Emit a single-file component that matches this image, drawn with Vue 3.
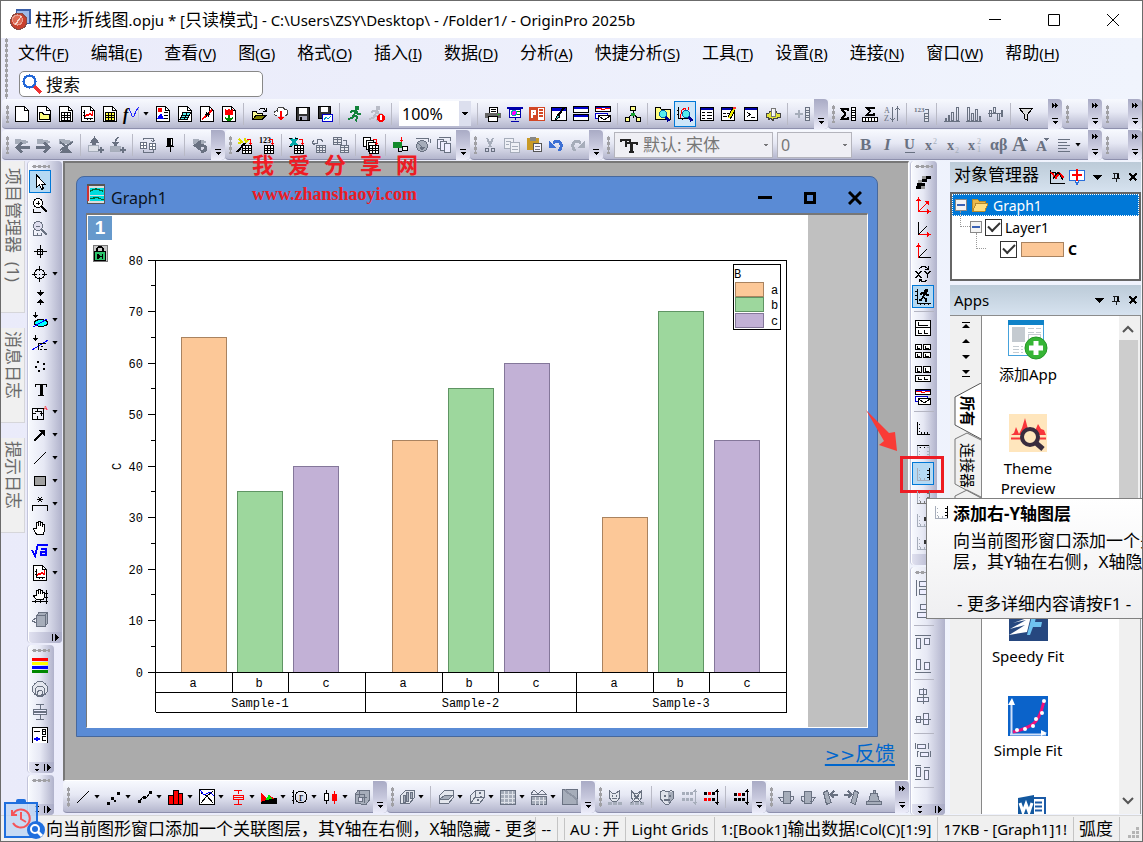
<script setup>
import { h } from 'vue'

const G = '#697181'
const L = '#a6adba'
const P = (d, s = '#000', f = 'none', w = 1) => `<path d="${d}" stroke="${s}" fill="${f}" stroke-width="${w}"/>`
const R = (x, y, w, hh, f = '#000', s = 'none') => `<rect x="${x}" y="${y}" width="${w}" height="${hh}" fill="${f}" stroke="${s}"/>`
const C = (x, y, r, f = 'none', s = '#000', w = 1) => `<circle cx="${x}" cy="${y}" r="${r}" fill="${f}" stroke="${s}" stroke-width="${w}"/>`
const T = (x, y, t, size, f = '#000', more = '') => `<text x="${x}" y="${y}" font-size="${size}" fill="${f}" font-family="Liberation Serif, serif" ${more}>${t}</text>`
const grid = (x, y, nx, ny, cw, ch, f = '#fff', s = '#000') => {
  let d = ''
  for (let i = 1; i < nx; i++) d += `M${x + i * cw} ${y}v${ny * ch}`
  for (let i = 1; i < ny; i++) d += `M${x} ${y + i * ch}h${nx * cw}`
  return R(x, y, nx * cw, ny * ch, f, s) + P(d, s)
}
const page = P('M1.5 .5H10.5L14.5 4.5V15.5H1.5Z', '#000', '#fff') + P('M10.5 .5V4.5H14.5')
const runner = (c, x = 0) => C(10 + x, 2, 1.6, c, c) + P(`M${9 + x} 4L${7 + x} 9L${10 + x} 11L${9 + x} 15.5M${7 + x} 9L${5 + x} 12L${1 + x} 13M${3 + x} 7L${5 + x} 5H${9 + x}L${11 + x} 8H${14 + x}`, c, 'none', 2)
const lens = (x, y, c = '#5ee') => P(`M${x + 2} ${y + 2}L${x + 6} ${y + 7}`, '#000090', 'none', 3) + C(x, y, 3.5, c, '#06a')
const folderG = P('M1.5 5V2.5H6L7 4H13V6', L, L) + R(1, 3, 11, 4, L)
const sub = (x, y, s = '#000') => grid(x, y, 3, 3, 3, 2.5, '#fff', s)
const redHook = P('M9.5 2.5H13.5V6', '#f00') + P('M11 5.5L13.5 8L16 5.5Z', 'none', '#f00')
const axis = (l, b, l2) => P('M3.5 2V14.5', l) + P('M3.5 14.5H16', b) + P('M4 14L12 6', l2)
const panelAxis = (l, t, r, b) =>
  P('M2.5 2V14M4 4.5h1M4 8.5h1M4 11.5h1', l) + P('M2 2.5H15M5.5 4v1M9.5 4v1M12.5 4v1', t) +
  P('M14.5 2V14M12 4.5h2M12 8.5h2M12 11.5h2', r) + P('M2 14.5H15M5.5 12v2M9.5 12v2', b)
const N = 'none'
const cat = P('M2.5 1.5L5 4H9L12.5 1.5V9L10 12H5L2.5 9Z', G, '#e4e7ee') + R(5, 6, 1, 2, G) + R(9, 6, 1, 2, G) + P('M5 9.5H10', G) + R(1, 13, 4, 3, L) + R(6, 13, 4, 3, L) + R(11, 13, 4, 3, L)
const box3 = P('M1.5 14.5V6.5L6.5 1.5H15.5V8.5L10.5 14.5Z', G, '#e3e6ed')
const dots = (a, b) => R(1, 3, 3, 3, a) + R(5, 3, 3, 3, b) + R(9, 3, 3, 3, a) + R(1, 9, 3, 3, b) + R(5, 9, 3, 3, b) + R(9, 9, 3, 3, a) + P('M14.5 1V15M12.5 3L14.5 1L16 3M12.5 13L14.5 15L16 13', a)

const icons = {
  page,
  pfolder: page + P('M3.5 13.5V6.5H6.5L7.5 8.5H13.5V13.5Z', '#000', '#ffff80'),
  psheet: page + grid(3.5, 6.5, 3, 3, 3, 2.5),
  pgraph: page + P('M4.5 4V12.5H13M3 6.5h2M3 9.5h2M7.5 12v2M10.5 12v2') + P('M5 11L7 8L8 10L10 7L12 10L13 5', '#f00'),
  pmatrix: page + grid(3.5, 6.5, 3, 3, 3, 2.5, '#ffff40'),
  func: P('M5 15.5H14.5V2', '#c8cad8') + T(-1, 14, 'f', 16, '#000', 'font-style="italic" font-weight="bold"') + P('M5 2L8 10L10 10L12 5L15 1', '#22f'),
  playout: page + R(3, 2, 4, 4, '#f00') + P('M9 6.5h4M9 9.5h4M9 12.5h4') + P('M3 12H8L6 8Z', '#00f', '#00f'),
  pexcel: page + P('M3 13.5L6 6.5H13.5L10.5 13.5Z', '#000', '#5ee') + P('M4 11.5H11M5 9H12M7 13L10 7'),
  pdig: page + P('M3 13.5L13 4', '#f00', N, 2) + P('M7 6L10 11M10 6L7 11M6 8.5h5'),
  pflower: page + P('M4 12L8 14.5L12 12M8 8V14', '#080', N, 2) + P('M4.5 3.5L6 5.5L8 3.5L10 5.5L11.5 3.5V8.5H4.5Z', '#f00', '#f00'),
  open: P('M1.5 13.5V5.5H5L6.5 7.5H11.5V9', '#000', '#ffff99') + P('M1.5 13.5L5 9.5H15L11 13.5Z', '#000', '#808000') + P('M8 4L10 2.5H13L15 5M15 2V5H12'),
  cloud: P('M4 9.5C-1 9 1 4.5 4 5C4 0 11 0 11.5 3.5C16 3 16 9.5 12 9.5', '#444', '#fff') + P('M8 5V14', '#f00', N, 2) + P('M4.5 11H11.5L8 15Z', 'none', '#f00'),
  save: R(1.5, 1.5, 13, 13, '#333', '#000') + R(4, 2, 8, 6, '#fff') + R(4, 10, 8, 4, '#aab') + R(5, 11, 2, 3),
  saveas: R(1.5, .5, 12, 12, '#333', '#000') + R(4, 1, 7, 5, '#fff') + R(5.5, 8.5, 10, 7, '#fff', '#00c') + P('M7 14L9 11L11 13L14 10', '#09c'),
  run: runner('#12823a'),
  stop: runner('#b9bcc7', -1) + C(12, 12, 3.5, '#f00', '#f00') + R(11, 9, 2, 5, '#fff'),
  print: R(4.5, 1.5, 8, 6, '#fff', '#000') + R(0, 7, 16, 5, '#666') + R(3.5, 10.5, 9, 5, '#fff', '#000') + R(13, 8, 1, 1, '#0f0') + P('M6 3.5h5M6 5.5h5'),
  slide: R(0, 1, 16, 2, '#00a') + R(2.5, 3.5, 11, 8, '#fff', '#00a') + C(7, 7, 2.5, '#f0f', '#0aa') + P('M10 5.5h3M10 8.5h3', '#080') + P('M8 12V14M4 15.5H12', '#00a'),
  ppt: P('M6 1.5H15.5V14.5H6', '#d24726', '#fff') + R(0, 1, 9, 14, '#d24726') + P('M10 4h4M10 7h4M10 10h4', '#d24726', N, 2) + P('M3 12V5H6V8H3', '#fff', N, 2),
  brush: R(.5, 1.5, 15, 13, '#fff', '#000') + R(1, 2, 14, 3, '#00c') + P('M14 1L7 9', '#000', N, 2) + P('M7 8L4 14L9 11Z', '#000', '#4cc'),
  tile: R(.5, .5, 15, 6, '#fff', '#000') + R(1, 1, 14, 2, '#00c') + R(.5, 8.5, 15, 6, '#fff', '#000') + R(1, 9, 14, 2, '#00c'),
  tile2: R(.5, .5, 15, 5, '#fff', '#000') + P('M1 1.5h14', '#00c') + P('M1 3L5 2L8 4L12 2L15 3', '#f00') + R(.5, 7.5, 12, 5, '#fff', '#00c') + R(3.5, 9.5, 12, 6, '#fff', '#000') + P('M4 10L9 14L15 10'),
  tree: R(5.5, .5, 5, 4, '#ff8', '#000') + P('M8 5V8M8 8L4 11M8 8L12 11M8 8V12') + R(.5, 11.5, 4, 4, '#ff8', '#000') + R(11.5, 11.5, 4, 4, '#ff8', '#000') + R(6, 7, 4, 3, '#18a030'),
  ffind: P('M.5 13.5V1.5H5L6.5 3.5H15.5V13.5Z', '#000', '#ffff80') + lens(8, 8),
  gfind: P('M1.5 1V12.5H15M0 4.5h2M0 8.5h2M5.5 12v2') + P('M3 12L5 4L8 2L9 4L11 4L12 1', '#f00') + lens(9, 8),
  tbl: R(1.5, 1.5, 13, 13, '#fff', '#000') + R(2, 2, 12, 2, '#00a') + P('M3 6.5h3M8 6.5h5M3 9.5h3M8 9.5h5M3 12.5h3M8 12.5h5'),
  tblpen: R(.5, 1.5, 13, 13, '#fff', '#000') + R(1, 2, 12, 2, '#00a') + P('M2 7.5h3M6 7.5h3M2 10.5h4') + P('M13 3L8 12', '#000', N, 4) + P('M13 3L8 12', '#ee0', N, 2) + P('M14 1L13 3', '#f33', N, 3),
  cmd: R(1.5, 1.5, 13, 13, '#fff', '#000') + R(2, 2, 12, 2, '#00a') + P('M4 6L7 8.5L4 11M8 11.5h4'),
  gear: P('M1 7H4L5 5H11L12 7H15V11H13L12 13L9 12L8 15L6 12L3 14L3 11H1Z', '#444', '#e2e235') + R(6, 2, 4, 8, '#eee', '#777') + P('M7.5 3V10', '#fff'),
  addcol: P('M0 8h8M4 4v8', L, N, 2) + grid(10.5, 1.5, 1, 5, 4, 2.6, '#e6e8ef', G),
  sigcol: P('M8 4.5V3H1.5L5.5 8L1.5 13H8V11', '#000', N, 2) + grid(11.5, 1.5, 1, 5, 4, 2.6),
  sigrow: P('M12 3V1.5H4.5L8.5 5L4.5 9H12V7', '#000', N, 2) + grid(.5, 11.5, 5, 1, 3, 4),
  sort: T(0, 7, 'A', 8, G) + T(0, 15, 'Z', 8, G) + P('M8.5 1V14M6.5 12L8.5 15L10.5 12M13.5 15V2M11.5 4L13.5 1L15.5 4', G),
  num: T(0, 6, '123', 7, G, 'font-weight="bold"') + P('M11 3.5h3v3', G) + grid(10.5, 7.5, 1, 3, 4, 2.6, '#e6e8ef', G),
  bars1: R(1.5, 12.5, 1, 2, N, G) + R(4.5, 9.5, 1, 5, N, G) + R(7.5, 6.5, 2, 8, N, G) + R(12.5, 1.5, 2, 13, N, G) + P('M0 15.5h16', G),
  bars2: R(1.5, 1.5, 2, 13, N, G) + R(5.5, 7.5, 2, 7, N, G) + R(9.5, 3.5, 2, 11, N, G) + R(13.5, 10.5, 1, 4, N, G) + P('M0 15.5h16', G),
  bars3: R(1.5, 4.5, 2, 6, N, G) + R(5.5, 1.5, 2, 5, N, G) + R(9.5, 7.5, 2, 7, N, G) + R(13.5, 4.5, 1, 6, N, G) + P('M0 7.5h15', G),
  funnel: P('M1.5 2.5H14.5L9.5 8.5V14.5L6.5 12.5V8.5Z', '#000', '#ddd'),
  back: folderG + P('M3 10.5H16M8 5.500L3 10.5L8 15.500', G, N, 3),
  fwd: folderG + P('M0 10.5H13M8 5.500L13 10.5L8 15.500', G, N, 3),
  nofolder: folderG + P('M2 13L15 5', G, N, 2) + P('M3 15.500L8 10L13 15.500Z', G, G) + P('M2 5L10 11', G, N, 2),
  upf: P('M4 8H7V5H10L6.5 0L3 5H5', G, G) + R(.5, 8.5, 10, 6, '#dde0e8', L) + P('M10 12.5h6M13 9.5v6', G, N, 2),
  downf: P('M9 0L5 3V6M2 5H9L5.5 9Z', G, G) + R(.5, 9.5, 10, 5, '#aab0bd', L) + P('M10 12.5h6M13 9.5v6', G, N, 2),
  swap: grid(.5, 5.5, 2, 2, 3, 3, '#fff', G) + grid(9.5, 6.5, 2, 2, 3, 3, '#fff', G) + P('M3 3V1.5H13V4M11 3L13 5L15 3M13 13V15.5H3V13', G),
  pin: R(5, 1, 6, 8) + R(9, 2, 1, 6, '#fff') + R(4, 9, 8, 1) + P('M8 10V15'),
  undo2: folderG + P('M5 8.5H10C15 8.500 15 14.500 9 14.500', G, N, 3) + P('M8 4L2 8.500L8 13Z', G, G),
  wand: P('M0 15L8 6', '#000', N, 2) + P('M2 2L6 6M8 1V4M1 6H4M11 3L8 6', '#dd0', N, 2) + redHook + sub(5.5, 8.5),
  imp123: T(0, 6, '123', 8, '#000', 'font-weight="bold"') + redHook + sub(5.5, 8.5),
  xls: P('M2 1L8 9M8 1L2 9', '#0aa', N, 3) + P('M0 1.5h3M6 1.500h3M0 9.500h3') + redHook + sub(5.5, 8.5),
  impg: P('M1 6H6V2H10L12 5M1 6L3 3M1 6L4 8', G) + grid(5.5, 8.5, 3, 3, 3, 2.3, '#e6e8ef', G),
  impt: grid(.5, .5, 2, 3, 4, 2.3, '#e6e8ef', G) + P('M10 3.5h3v4', G) + grid(7.5, 8.5, 2, 3, 4, 2.3, '#e6e8ef', G),
  copies: R(.5, .5, 7, 9, '#fff', '#000') + R(3.5, 3.5, 7, 9, '#fff', '#000') + R(5.5, 5.5, 7, 9, '#fff', '#000') + redHook + sub(6.5, 8.5),
  plug: R(0, 5, 9, 6, '#128a2b') + P('M8.5 0V4', '#f00') + P('M6 2.5H11L8.5 5Z', N, '#f00') + R(9.5, 9.5, 5, 4, '#fff', '#000') + P('M5 11V14.5H9'),
  disc: C(7, 9, 5.5, L, G) + P('M2 5L7 10M5 10H10L7 13Z', G, G) + P('M1 1.5H13V5M15 2V6', G),
  pages: R(.5, 2.5, 6, 9, '#eef', G) + R(3.5, 4.5, 6, 9, '#eef', G) + R(7.5, 6.5, 6, 9, '#eef', G) + P('M2 .5H13V4', G),
  cut: P('M5 1L9 10M11 1L7 10', L, N, 2) + C(5, 13, 2, N, G) + C(11, 13, 2, N, G),
  copy: R(.5, 1.5, 9, 10, '#eef0f6', L) + R(6.5, 5.5, 9, 10, '#eef0f6', L) + P('M2 4.5h5M2 7.5h3M8 9.5h6M8 12.5h6', L),
  paste: R(1, 1, 12, 12, '#c89a28') + R(4, 0, 6, 4, '#888') + P('M7.5 6.5H15.5V14.5H7.5Z', '#555', '#f5f5ff') + P('M9 9.5h5M9 12.5h5', '#778'),
  undo: P('M5 6C11 1 16 7 11 14', '#3c6fd4', N, 3) + P('M1 3V11H8Z', N, '#3c6fd4'),
  redo: P('M11 6C5 1 0 7 5 14', L, N, 3) + P('M15 3V11H8Z', N, L),
  bold: T(2, 13, 'B', 17, G, 'font-weight="bold"'),
  ital: T(4, 13, 'I', 17, G, 'font-weight="bold" font-style="italic"'),
  under: T(2, 12, 'U', 15, G, 'font-weight="bold"') + P('M3 15.5H13', G),
  sup: T(1, 13, 'x', 14, G, 'font-weight="bold"') + T(9, 7, '2', 8, L),
  sub: T(1, 13, 'x', 14, G, 'font-weight="bold"') + T(9, 16, '2', 8, L),
  supsub: T(0, 13, 'x', 14, G, 'font-weight="bold"') + T(9, 7, '2', 8, L) + T(9, 15, '1', 8, L),
  ab: T(0, 13, 'αβ', 16, G, 'font-weight="bold"'),
  big: T(0, 14, 'A', 20, G, 'font-weight="bold"') + P('M11 4L13.5 1L16 4Z', N, G),
  small: T(2, 14, 'A', 15, G, 'font-weight="bold"') + P('M10 1H15L12.5 4Z', N, G),
  align: P('M2 2.5h12M2 5.5h9M2 8.5h12M2 11.5h9M2 14.5h12', G),
  arrow: P('M4.5 1V13L7.5 10.5L9.5 15.5L11.5 14.5L9.5 10H13Z', '#000', '#fff'),
  zin: C(6, 6, 4.5, '#fff') + P('M4 6h4M6 4v4') + P('M9 9L15 15', '#000', N, 2) + P('M1.5 12V15.5H9'),
  zout: C(6, 6, 4.5, '#dde', G) + P('M4 6h4', G) + P('M9 9L15 15', G, N, 2) + P('M1.5 10V15.5H9V13M5 13v2', G),
  cross: P('M8.5 2V15M2 8.5H15M5.5 6.5h5v5h-5z'),
  target: C(7.5, 8, 5) + P('M7.5 0V5M7.5 11V16M0 8.5H5M10 8.5H15M7 8.5h1'),
  vpts: P('M8.5 1V6M8.5 11V16') + P('M5 3H12L8.5 7.5ZM5 14H12L8.5 9.5Z', N, '#000'),
  mask: P('M3.5 0V6') + P('M0 3H7L3.5 6Z', N, '#000') + '<ellipse cx="9" cy="11" rx="7" ry="3.5" fill="#0ff" stroke="#000"/>' + P('M1 15L15 7', '#00f'),
  mask2: P('M3.5 0V6') + P('M0 3H7L3.5 6Z', N, '#000') + P('M0 15L16 5', '#00f') + P('M6.5 15V8.5H14M9 11.5h2M12 14.5h3M8 14.5h2'),
  pts: R(5, 3, 2, 2) + R(11, 5, 2, 2) + R(3, 8, 2, 2) + R(11, 10, 2, 2) + R(6, 12, 2, 2),
  text: P('M3.5 6V3H14.5V6M6 14H12', '#000') + P('M9 3V14', '#000', N, 3) + P('M3 3.5H15'),
  tframe: P('M.5 4.5H11.5V15.5H.5ZM.5 9.5H4M8 9.5H11M5.5 5V8M5.5 12V15M3 7.5h6v4') + T(11, 6, 'A', 7, '#f00'),
  arr: P('M2 14L11 5', '#000', N, 2) + P('M6 3H13V10Z', N, '#000'),
  line: P('M2 14L14 2'),
  rect: R(2.5, 3.5, 11, 9, '#a0a0a0', '#000'),
  brack: P('M.5 15V9.5H15.5V15M5 3.5h6M6 1L10 6M10 1L6 6'),
  hand: P('M4.5 15.5L1.5 10L4.5 9.5V4L6.5 3.5V7V2.5H8.5V7V3.5H10.5V8V5.5H12.5V11L11.5 15.5Z', '#000', '#fff'),
  sqrt: P('M0 8L3 14L6 2.5H16', '#00f', N, 2) + P('M9 7H14V14M14 10H9V13H14', '#00f', N, 2),
  handax: P('M4.5 11.5L1.5 8L4.5 7.5V3L6.5 2.5V6V1.5H8.5V6V2.5H10.5V6V4.5H12.5V9L11.5 11.5Z', '#000', '#fff') + P('M0 13.5H16M14.5 2V16M3.5 12v3M8.5 12v3M13 5.5h3M13 9.5h3'),
  cube: P('M4.5 4.5L7 1.5H15.5V12L13 15.5H4.5Z', G, L) + P('M4.5 4.5H13V15M13 4.5L15 2M5 6L0 10L5 12', G),
  rainbow: R(0, 0, 16, 3, '#f00') + R(0, 4, 16, 3, '#ff0') + R(0, 8, 16, 3, '#00f') + R(0, 12, 16, 3, '#080'),
  rings: C(8, 8, 7.5, '#e4e6ee', G) + C(8, 10, 5, '#e4e6ee', G) + C(8, 12, 2.5, '#e4e6ee', G),
  boxp: P('M8.5 0V5M4 .5h8M8.5 11V15M4 15.5h8', G) + R(1.5, 5.5, 13, 5, '#eef', G) + P('M1 8h14', G, N, 2),
  legend: P('M.5 16V.5H15.5V16', '#000', '#fff') + P('M2 4.5h6M10 2.5h3v5h-3v-5M10 4.5h3M13.5 9.5h-3v4h3') + P('M2 11.5h6M5 9.5v4', '#00f', N, 2),
  dotline: R(1, 13, 3, 3) + R(5, 8, 3, 3) + R(8, 11, 2, 2) + R(11, 3, 3, 3),
  ldot: P('M2 13L6 8L9 9L13 4') + R(1, 11, 3, 3) + R(6, 7, 3, 3) + R(12, 2, 3, 3),
  redbar: R(.5, 6.5, 5, 9, '#f00', '#000') + R(5.5, 1.5, 5, 14, '#f00', '#000') + R(10.5, 4.5, 4, 11, '#f00', '#000'),
  ternary: R(.5, .5, 15, 15, '#fff', '#000') + P('M2 14L8 7L14 14M2 4L8 7L14 2') + P('M1 1L5 6L11 3L15 7', '#00f'),
  redbox: P('M8 1V5M4 1.5h8M8 11V15M4 15.5h8M3 6.5h10v4h-10zM3 8.5h10', '#f00'),
  area: P('M0 15V3L5 9L8 6L16 11V15Z', N, '#f00') + P('M4 12L8 5L12 12Z', N, '#0e0') + P('M0 15V13L5 11L16 9V15Z', N, '#000'),
  polar: P('M1.5 1V15M0 3.5h1M0 7.5h1M0 11.5h1') + C(9, 8, 6) + T(7, 12, 'r', 12),
  candle: P('M3.5 1V4M3.5 11V15') + R(1.5, 4.5, 4, 7, '#fff', '#000') + P('M11 2V15', '#f00') + R(9, 5, 5, 7, '#f00'),
  stack: P('M1.5 14.5V4.5L4 1.5H15.5V11L12 15.5Z', G, L) + P('M2 5H10V14M5 2V8H13', G) + R(4, 8, 4, 4, '#dde', G),
  b3bars: box3 + R(4.5, 6.5, 2, 7, L, G) + R(7.5, 3.5, 2, 9, L, G) + R(11.5, 3.5, 2, 6, L, G),
  b3slab: box3 + P('M2 10L7 6H15L10 11Z', G, L),
  b3dots: box3 + P('M6.5 2V8H15M6 8L2 14', G) + R(10, 3, 2, 2, G) + R(8, 10, 2, 2, G) + R(11, 7, 2, 2, G),
  heat: R(.5, 1.5, 15, 14, L, G) + P('M1 5.5h14M1 9.5h14M1 13h14M4.5 2v13M8.5 2v13M12.5 2v13', '#dde0e8') + P('M0 1.5h16M.5 1v15', G),
  heat2: R(.5, 7.5, 15, 8, L, G) + P('M1 11.5h14M4.5 8v8M8.5 8v8M12.5 8v8', '#dde0e8') + P('M0 5L3 1L7 5L11 1L15 5M0 5.5h16', G),
  slab: R(.5, .5, 15, 15, L, G) + P('M3 1Q7 5 12 8T15 15', '#8d94a3', N, 2),
  cat,
  cat2: cat + P('M2 2L13 14M13 2L2 14', G),
  face: P('M1.5 2.5L5 1.5L8 3L12 1.5L14.5 3V9L10 15H6L1.5 10Z', G, '#dfe2ea') + P('M9 3L14 3V9L9 14Z', N, L) + R(5, 6, 2, 2, G) + R(10, 6, 2, 2, G) + P('M5 10.5H11', G, N, 2),
  dotsg: dots(L, L),
  dotsr: dots('#000', '#f00'),
  dotsb: R(1, 4, 3, 3) + R(5, 4, 3, 3, '#f00') + R(9, 4, 3, 3) + R(1, 9, 3, 3) + R(5, 9, 3, 3) + R(9, 9, 3, 3) + P('M14.5 1V15M12.5 3L14.5 1L16 3M12.5 13L14.5 15L16 13'),
  rot1: R(5, 2, 7, 12, L, G) + P('M5 8.5H1L3 12L6 13M12 7H15V11L12 13', G),
  rot2: R(4, 2, 7, 12, L, G) + P('M11 8.5H15L13 12L10 13M4 7H1V11L4 13', G),
  tilt1: P('M1.5 3.5L5.5 1.5L9 13.5L4.5 15.5Z', G, L) + P('M10 5.5H16M12 2L8.5 5.5L12 9', G, N, 2),
  tilt2: P('M14.5 3.5L10.5 1.5L7 13.5L11.5 15.5Z', G, L) + P('M0 5.5H6M4 2L7.5 5.5L4 9', G, N, 2),
  bell: P('M.5 15.5V12.5H15.5V15.5ZM2.500 12.500L5 4H11L13.500 12.500ZM7 4V1.5H9V4', G, L),
  offs: P('M1 13.5h5M2 10.5h4M6 10.5h4M7 6.5h5M11 3.5h5', '#000', N, 3) + P('M6 13.5h4M3 7.5h4M7 3.5h4', '#999', N, 3),
  ax1: axis('#f00', '#f00', '#f00') + P('M1 4L3.5 0L6 4ZM12 12L16 14.5L12 17ZM9 4H14V9Z', N, '#f00'),
  ax2: axis('#000', '#f00', '#000') + P('M12 12L16 14.5L12 17Z', N, '#f00'),
  ax3: axis('#f00', '#000', '#000') + P('M1 4L3.5 0L6 4Z', N, '#f00'),
  xy: P('M1 5L6 12M6 5L1 12M10 5L12.500 8.5L15 5M12.500 8V12', '#000', N, 1.5) + P('M4 3L7 .5H10L13 3M13 0V3.500H10M12 14L10 15.5H7L4 13M4 16V13H7'),
  graphrun: P('M2.5 0V14.5H16M0 2.5h2M0 6.5h2M0 10.5h2M5.5 14v2M9.5 14v2M13.5 14v2') + C(11, 2, 1.5, '#000') + P('M10 4L8 8L11 10V13M8 8L6 11H4M5 6L7 4H10L12 6H14', '#000', N, 1.5),
  lay1: R(.5, .5, 15, 15, '#fff', '#000') + P('M1 7.5h14M3.5 2v3.5h9M3.5 9.5v4h3M9.5 9.5v4h3'),
  lay2: R(.5, 1.5, 6, 5, '#fff', '#000') + R(8.5, 1.5, 7, 5, '#fff', '#000') + R(.5, 9.5, 6, 5, '#fff', '#000') + R(8.5, 9.5, 7, 5, '#fff', '#000') + P('M2.5 3v2h2M10.5 3v2h3M2.5 11v2h2M10.5 11v2h3'),
  lay3: R(.5, .5, 6, 6, '#fff', '#000') + R(8.5, .5, 7, 6, '#fff', '#000') + R(.5, 9.5, 15, 6, '#fff', '#000') + P('M2.5 2v3h2M10.5 2v3h3M3.5 11v2h3M9.5 11v2h3'),
  newL: P('M2.5 2V14.5H15M4 4.5h1M4 8.5h1M4 11.5h1M6.5 12v2M9.5 12v2M12.5 12v2'),
  newT: panelAxis(L, '#000', L, N),
  newR: panelAxis(L, N, '#000', L),
  newA: panelAxis(L, N, '#777', '#777'),
  newB: panelAxis(L, N, N, L) + R(9, 5, 3, 4, '#333'),
  alL: P('M1.5 0V16', G, N) + R(4.5, 1.5, 8, 5, '#eef', G) + R(4.5, 9.5, 10, 5, '#eef', G),
  alR: P('M14.5 0V16', G) + R(5.5, 1.5, 7, 5, '#eef', G) + R(2.5, 9.5, 10, 5, '#eef', G),
  alT: P('M0 1.5h16', G) + R(1.5, 4.5, 4, 10, '#eef', G) + R(9.5, 4.5, 5, 6, '#eef', G),
  alB: P('M0 15.5h16', G) + R(1.5, 2.5, 4, 10, '#eef', G) + R(9.5, 5.5, 5, 7, '#eef', G),
  alC: R(4.5, 1.5, 7, 5, '#eef', G) + R(2.5, 9.5, 11, 4, '#eef', G) + P('M8 0V16', G),
  alM: R(1.5, 5.5, 4, 6, '#eef', G) + R(8.5, 2.5, 5, 11, '#eef', G) + P('M0 8.5h16', G),
  eqH: R(2.5, 2.5, 8, 4, '#eef', G) + R(5.5, 10.5, 8, 4, '#eef', G) + P('M0 1v6M13 1v6M2 9.5h2M15.5 9v6M2.5 10v5', G),
  eqV: R(1.5, 2.5, 4, 9, '#eef', G) + R(9.5, 5.5, 4, 9, '#eef', G) + P('M0 .5h6M9 2.5h6M0 14.5h6', G),
  origin: R(5, 0, 11, 11, '#9db9e8', '#3b5fa8') + C(7, 9, 6.5, '#c9402e', '#8d4a42') + C(6, 8, 4, '#dd6a55', '#e9a090') + P('M4 12L9 5', '#f6d8d0'),
  mag: C(6, 6, 4.7, '#fff', '#2468d8', 2) + P('M10 10L15 15', '#e33', N, 3),
  tt: P('M0 5V2.500H9V5M4.500 2V10', '#222', N, 2) + P('M5 8V5.500H16V8M8 15H13', '#222', N, 2) + P('M10.500 5V15', '#222', N, 3),
  gwin: R(1, 0, 14, 15, '#ddd', '#555') + R(3, 2, 11, 6, '#0dd') + R(3, 9, 11, 4, '#0dd') + P('M3 5L8 3L14 5M3 11L9 10L14 12', '#063') + P('M1.5 1v12', '#c33'),
  lock: R(1, 0, 14, 16, '#c9c9c9', '#777') + P('M5 7V3.5L6.5 2H9.5L11 3.5V7', '#000', N, 2) + R(2.5, 6.5, 11, 9, '#2cc36b', '#000') + P('M5 9L9 11.5L5 14ZM10.5 9V14', '#000', '#000'),
  redplot: P('M1.5 1V14.5H16') + P('M2 3L7 9L10 4L15 9', '#f00', N, 2) + P('M4 10L9 3L14 11M3 3h3v3'),
  addp: P('M.5 1.5H15.5V11.5H10L8 15.5L6 11.5H.5Z', '#2a6fdb', '#fff') + P('M8 0V12M3 6H13', '#f00', N, 2),
  ppin: P('M5 3.5H11M6.5 4V9M3 9.5H13M8 10V14') + R(9, 4, 2, 5),
  px: P('M4 4L12 12M12 4L4 12', '#000', N, 2),
  tri: P('M3 6H13L8 11Z', N, '#000'),
  fold: P('M0 14V2H5L7 4H13V6', '#b58a2c', '#e8b84a') + P('M1 14L4 6H16L13 14Z', '#b58a2c', '#ffdf80')
}
const Ic = (props) => h('svg', { viewBox: '0 0 16 16', class: 'ic', 'shape-rendering': 'crispEdges', 'aria-hidden': 'true', innerHTML: icons[props.n] })
Ic.props = ['n']

const parse = (s) => s.split(' ').filter(Boolean).map((t) => ({ n: t.replace(/[+*]/g, ''), dd: t.includes('+'), on: t.includes('*') }))
const bar = (s, o = {}) => ({ items: parse(s), ...o })

const topRows = [
  [
    bar('page pfolder psheet pgraph pmatrix func+ playout pexcel pdig pflower | open cloud save saveas | run stop | ZOOM | print slide ppt brush tile tile2 | tree | ffind gfind* tbl tblpen cmd gear | addcol'),
    bar('sigcol sigrow sort | num | bars1 bars2 bars3 | funnel', { grow: true, more: true }),
    bar('', { stub: true, more: true }),
    bar('', { stub: true, more: true })
  ],
  [
    bar('back fwd nofolder | upf downf | swap pin | undo2'),
    bar('wand imp123 | xls impg impt | copies | plug disc pages'),
    bar('cut copy paste undo redo'),
    bar('FONT SIZE bold ital under sup sub supsub ab big small align+', { grow: true, more: true }),
    bar('', { stub: true, more: true })
  ]
]
const bottomBars = [
  bar('line+ dotline+ ldot+ redbar+ ternary+ redbox+ area+ polar+ candle+ stack'),
  bar('b3bars+ | b3slab+ b3dots+ heat+ heat2+ slab'),
  bar('cat cat2 | face dotsg dotsr | dotsb'),
  bar('rot1 rot2 tilt1 tilt2 bell', { grow: true, more: true })
]
const leftBars = [
  bar('arrow* zin zout cross target+ vpts mask+ mask2+ pts text tframe+ arr+ line+ rect+ brack+ hand sqrt+ pgraph+ handax cube', { wide: true, tools: true }),
  bar('rainbow rings boxp legend', { tail: true, more: true }),
  bar('', { grow: true, more: true })
]
const rightBars = [
  bar('offs ax1 ax2 ax3 xy graphrun* | lay1 lay2 lay3 tile2 | newL newT newR* newA newB newB'),
  bar('alL alR | alT alB | alC alM | eqH eqV |', { wide: true, grow: true, more: true })
]

const menus = [['文件', 'F'], ['编辑', 'E'], ['查看', 'V'], ['图', 'G'], ['格式', 'O'], ['插入', 'I'], ['数据', 'D'], ['分析', 'A'], ['快捷分析', 'S'], ['工具', 'T'], ['设置', 'R'], ['连接', 'N'], ['窗口', 'W'], ['帮助', 'H']]
const sideTabs = [['项目管理器  (1)', 'tall'], ['消息日志', ''], ['提示日志', '']]

const colors = { a: ['#fcc898', '#a98360'], b: ['#9dd79d', '#5f9463'], c: ['#c2b1d6', '#84779a'] }
const groups = [
  { name: 'Sample-1', x: 155, end: 365, bar: 181, v: { a: 65, b: 35, c: 40 } },
  { name: 'Sample-2', x: 365, end: 576, bar: 392, v: { a: 45, b: 55, c: 60 } },
  { name: 'Sample-3', x: 576, end: 786, bar: 602, v: { a: 30, b: 70, c: 45 } }
]
const yOf = (v) => Math.floor(672 - v * 5.15)
const bars = groups.flatMap((g) => ['a', 'b', 'c'].map((k, i) => ({ x: g.bar + i * 56, y: yOf(g.v[k]), k, lx: g.x + [38, 104, 171][i] })))
const ticks = [0, 10, 20, 30, 40, 50, 60, 70, 80]
const legend = [{ k: 'a', y: 282 }, { k: 'b', y: 297 }, { k: 'c', y: 313 }]

const apps = [
  { name: '添加App', k: 'add' },
  { name: 'Theme Preview', k: 'theme' },
  { name: '', k: 'blank' },
  { name: 'Speedy Fit', k: 'speedy' },
  { name: 'Simple Fit', k: 'simple' },
  { name: '', k: 'word' }
]
</script>

<template>
  <div class="app">
    <header class="title">
      <Ic n="origin" class="logo" />
      <h1><span>柱形</span>+<span>折线图</span>.opju * [<span>只读模式</span>] - C:\Users\ZSY\Desktop\ - /Folder1/ - OriginPro 2025b</h1>
      <div class="wbtns">
        <button aria-label="最小化"><svg width="12" height="12"><path d="M0 5.5H12" /></svg></button>
        <button aria-label="最大化"><svg width="12" height="12"><path d="M.5 .5H11.5V11.5H.5Z" /></svg></button>
        <button aria-label="关闭"><svg width="12" height="12"><path d="M0 0L12 12M12 0L0 12" /></svg></button>
      </div>
    </header>

    <div class="menuarea">
      <i class="grip tallgrip"></i>
      <div class="menucol">
        <nav class="menus">
          <button v-for="m in menus" :key="m[1]">{{ m[0] }}<span>(<u>{{ m[1] }}</u>)</span></button>
        </nav>
        <label class="search"><Ic n="mag" class="ic20" /><input type="text" placeholder="搜索" aria-label="搜索" /></label>
      </div>
    </div>

    <div v-for="(row, ri) in topRows" :key="ri" class="hrow">
      <div v-for="(tb, ti) in row" :key="ti" class="hbar" :class="{ grow: tb.grow, stub: tb.stub }">
        <i class="grip"></i>
        <template v-for="(it, i) in tb.items" :key="i">
          <i v-if="it.n === '|'" class="sep"></i>
          <span v-else-if="it.n === 'ZOOM'" class="combo zoomc"><select aria-label="缩放"><option>100%</option></select><Ic n="tri" class="arr" /></span>
          <span v-else-if="it.n === 'FONT'" class="combo fontc off"><Ic n="tt" /><select aria-label="字体"><option>默认: 宋体</option></select><Ic n="tri" class="arr" /></span>
          <span v-else-if="it.n === 'SIZE'" class="combo sizec off"><select aria-label="字号"><option>0</option></select><Ic n="tri" class="arr" /></span>
          <button v-else class="tool" :class="{ on: it.on }" :aria-label="it.n"><Ic :n="it.n" /><i v-if="it.dd" class="dd"></i></button>
        </template>
        <i class="cap"><svg width="8" height="24" shape-rendering="crispEdges"><path v-if="tb.more" d="M1 1L4 3L1 6ZM4 1L7 3L4 6Z" /><path d="M1 16H7V17H1ZM1 19H7L4 22Z" /></svg></i>
      </div>
    </div>

    <div class="main">
      <aside class="sidetabs">
        <button v-for="t in sideTabs" :key="t[0]" :class="t[1]">{{ t[0] }}</button>
      </aside>

      <div class="vcol left">
        <div v-for="(tb, ti) in leftBars" :key="ti" class="vbar" :class="{ wide: tb.wide, grow: tb.grow, tail: tb.tail, tools: tb.tools }">
          <i class="vgrip"></i>
          <button v-for="(it, i) in tb.items" :key="i" class="vtool" :class="{ on: it.on }" :aria-label="it.n"><span><Ic :n="it.n" /></span><i v-if="it.dd" class="dd"></i></button>
          <i class="vcap"><svg v-if="tb.more" width="5" height="8" shape-rendering="crispEdges"><path d="M0 0H5L3 2ZM0 5H5L3 7Z" /></svg><svg width="8" height="8" shape-rendering="crispEdges"><path d="M0 0H1V7H0ZM3 0L7 4L3 7Z" /></svg></i>
        </div>
      </div>

      <div class="center">
        <div class="mdi">
          <section class="gwin">
            <div class="gtitle">
              <Ic n="gwin" class="ic20" />
              <h2>Graph1</h2>
              <button aria-label="最小化图"><svg width="14" height="14"><path d="M0 6.5H14" /></svg></button>
              <button aria-label="最大化图"><svg width="14" height="14"><path d="M2.5 2.5H11.5V11.5H2.5Z" /></svg></button>
              <button aria-label="关闭图"><svg width="14" height="14"><path d="M1 1L13 13M13 1L1 13" /></svg></button>
            </div>
            <div class="gbody">
              <div class="sheet">
                <svg class="chart" viewBox="87 215 721 512" width="721" height="512" shape-rendering="crispEdges" role="img" aria-label="Graph1">
                  <path class="ln" d="M155.5 712V260.5H786.5V712.5H155.5M155 672.5H787M155 692.5H787" />
                  <g v-for="t in ticks" :key="t">
                    <path class="ln" :d="`M148 ${yOf(t) + .5}H155`" />
                    <path v-if="t < 80" class="ln" :d="`M151 ${yOf(t + 5) + .5}H155`" />
                    <text x="143" :y="yOf(t) + 5" text-anchor="end">{{ t }}</text>
                  </g>
                  <g v-for="b in bars" :key="b.x">
                    <rect :x="b.x + .5" :y="b.y + .5" width="45" :height="672 - b.y" :fill="colors[b.k][0]" :stroke="colors[b.k][1]" />
                    <text :x="b.lx" y="687" text-anchor="middle">{{ b.k }}</text>
                  </g>
                  <g v-for="g in groups" :key="g.name">
                    <path class="ln" :d="`M${g.end + .5} 672V712M${g.x + 77.5} 672V692M${g.x + 133.5} 672V692`" />
                    <text :x="(g.x + g.end) / 2" y="707" text-anchor="middle">{{ g.name }}</text>
                  </g>
                  <path class="ln" d="M155 672.5H787" />
                  <text transform="translate(121 470) rotate(-90)">C</text>
                  <rect class="ln wh" x="733.5" y="264.5" width="47" height="65" />
                  <text x="734" y="278">B</text>
                  <g v-for="l in legend" :key="l.k">
                    <rect x="735.5" :y="l.y + .5" width="28" height="14" :fill="colors[l.k][0]" :stroke="colors[l.k][1]" />
                    <text x="771" :y="l.y + 12">{{ l.k }}</text>
                  </g>
                </svg>
                <div class="badges"><b>1</b><Ic n="lock" /></div>
              </div>
              <div class="gutter"></div>
            </div>
          </section>
          <a class="feedback" href="#feedback"><span>&gt;&gt;</span>反馈</a>
        </div>
        <div class="hrow bottomrow">
          <div v-for="(tb, ti) in bottomBars" :key="ti" class="hbar" :class="{ grow: tb.grow }">
            <i class="grip"></i>
            <template v-for="(it, i) in tb.items" :key="i">
              <i v-if="it.n === '|'" class="sep"></i>
              <button v-else class="tool" :aria-label="it.n"><Ic :n="it.n" /><i v-if="it.dd" class="dd"></i></button>
            </template>
            <i class="cap"><svg width="8" height="24" shape-rendering="crispEdges"><path v-if="tb.more" d="M1 1L4 3L1 6ZM4 1L7 3L4 6Z" /><path d="M1 17H7V18H1ZM1 20H7L4 23Z" /></svg></i>
          </div>
        </div>
      </div>

      <div class="vcol right">
        <div v-for="(tb, ti) in rightBars" :key="ti" class="vbar" :class="{ wide: tb.wide, grow: tb.grow }">
          <i class="vgrip"></i>
          <template v-for="(it, i) in tb.items" :key="i">
            <i v-if="it.n === '|'" class="vsep"></i>
            <div v-else class="vcell">
              <button class="vtool" :class="{ on: it.on }" :aria-label="it.n"><span><Ic :n="it.n" /></span></button>
              <template v-if="it.n === 'newR'">
                <div class="redbox"></div>
                <svg class="redarrow" width="32" height="42"><path d="M0 0L23 23L29 22L31 41L13 35L18 31Z" fill="#f93b36" /></svg>
                <div class="tip" role="tooltip">
                  <Ic n="newR" />
                  <div>
                    <strong>添加右-Y轴图层</strong>
                    <p>向当前图形窗口添加一个关联图<br />层，其Y轴在右侧，X轴隐藏</p>
                    <p class="f1">- 更多详细内容请按F1 -</p>
                  </div>
                </div>
              </template>
            </div>
          </template>
          <i class="vcap"><svg v-if="tb.more" width="5" height="8" shape-rendering="crispEdges"><path d="M0 0H5L3 2ZM0 5H5L3 7Z" /></svg><svg width="8" height="8" shape-rendering="crispEdges"><path d="M0 0H1V7H0ZM3 0L7 4L3 7Z" /></svg></i>
        </div>
      </div>

      <aside class="panels">
        <div class="phead cjk">
          <h2>对象管理器</h2>
          <button aria-label="图形"><Ic n="redplot" /></button><button aria-label="添加"><Ic n="addp" /></button><button aria-label="菜单"><Ic n="tri" /></button><button aria-label="固定"><Ic n="ppin" class="ic14" /></button><button aria-label="关闭面板"><Ic n="px" class="ic14" /></button>
        </div>
        <div class="treebox">
          <div class="trow sel"><button class="pm" aria-label="折叠 Graph1"></button><Ic n="fold" class="ic18" /><span>Graph1</span></div>
          <div class="trow l1"><i class="dot1"></i><button class="pm" aria-label="折叠 Layer1"></button><input id="layer1" type="checkbox" checked /><label for="layer1">Layer1</label></div>
          <div class="trow l2"><i class="dot2"></i><input id="plotc" type="checkbox" checked /><i class="swatch"></i><label for="plotc"><b>C</b></label></div>
        </div>
        <div class="phead apps">
          <h2>Apps</h2>
          <button aria-label="菜单"><Ic n="tri" /></button><button aria-label="固定"><Ic n="ppin" class="ic14" /></button><button aria-label="关闭 Apps"><Ic n="px" class="ic14" /></button>
        </div>
        <div class="appbody">
          <div class="strip">
            <button class="sa" aria-label="首个"><svg width="8" height="7"><path d="M0 0H8V1H0ZM0 6L4 2L8 6Z" /></svg></button>
            <button class="sa" aria-label="上移"><svg width="8" height="7"><path d="M0 5L4 1L8 5Z" /></svg></button>
            <button class="sa" aria-label="下移"><svg width="8" height="7"><path d="M0 1L4 5L8 1Z" /></svg></button>
            <button class="sa" aria-label="末个"><svg width="8" height="7"><path d="M0 0L4 4L8 0ZM0 6H8V7H0Z" /></svg></button>
            <button class="vt act"><svg width="27" height="56"><path d="M27 0L1 14V42L27 56" fill="#fff" stroke="#555" /></svg><b>所有</b></button>
            <button class="vt"><svg width="27" height="68"><path d="M13 1L1 7V52L27 66M13 1L27 8" fill="none" stroke="#777" /></svg><b>连接器</b></button>
            <button class="vt"><svg width="27" height="56"><path d="M13 1L1 7V46L27 60M13 1L27 8" fill="none" stroke="#777" /></svg><b>绘图</b></button>
          </div>
          <ul class="applist">
            <li v-for="a in apps" :key="a.k">
              <svg width="40" height="40" viewBox="0 0 40 40">
                <g v-if="a.k === 'add'">
                  <rect x=".5" y=".5" width="35" height="35" fill="#fff" stroke="#46a2dc" /><rect width="36" height="5" fill="#0f82c8" />
                  <rect x="4" y="7" width="13" height="15" fill="#c4cad0" /><path d="M20 8.500H33M5 26.500H15M5 29.500H15M5 32.500H15M20 12.500H33" stroke="#c5ccd2" stroke-dasharray="6 2" /><rect x="20.500" y="14.500" width="12" height="10" fill="none" stroke="#c5ccd2" />
                  <circle cx="28" cy="28" r="11" fill="#36b535" stroke="#249726" /><path d="M28 21V35M21 28H35" stroke="#fff" stroke-width="5" />
                </g>
                <g v-else-if="a.k === 'theme'">
                  <rect x="1" width="38" height="38" fill="#ffe6bd" /><path d="M3 21L6 19L8 13L11 20L14 14L17 4L20 15L22 19L25 15L27 17L30 10L33 15L36 16L38 21Z" fill="#f8363b" /><path d="M3 24.500H38" stroke="#f8363b" stroke-width="2" />
                  <circle cx="22" cy="23" r="8" fill="#ffe6bd" stroke="#392c3e" stroke-width="4" /><path d="M28 29L35 35" stroke="#392c3e" stroke-width="5" />
                </g>
                <g v-else-if="a.k === 'speedy'">
                  <rect x="1" width="39" height="39" fill="#26477f" /><path d="M19 33L25 10H39L37 15H28L27 20H34L33 25H25L22 33Z" fill="#6fc3f0" /><path d="M19 16L5 21L18 18L2 27L17 23L1 33L19 30L23 14Z" fill="#fff" />
                </g>
                <g v-else-if="a.k === 'simple'">
                  <rect width="40" height="40" fill="#0b63ca" /><path d="M3.500 38V5M2 38.500H38" stroke="#cfe0fa" stroke-width="2" /><path d="M0 9L4 2L7 9ZM33 34L39 37L33 40Z" fill="#fff" /><path d="M5 36Q18 33 25 28T36 5" fill="none" stroke="#f0107c" stroke-width="3" />
                  <circle v-for="c in [[9, 34], [17, 33], [25, 30], [28, 23], [34, 17], [36, 5]]" :key="c[1]" :cx="c[0]" :cy="c[1]" r="2" fill="#fff" />
                </g>
                <g v-else-if="a.k === 'word'">
                  <rect x="24" y="8" width="13" height="28" fill="#fff" stroke="#1b5aa6" stroke-width="2" /><path d="M27 12.500H34M27 16.500H34M27 20.500H34" stroke="#1b5aa6" stroke-width="2" /><path d="M10 8L26 5V39L10 36Z" fill="#13589f" /><path d="M12 13L15 22L18 14L21 22L24 13" fill="none" stroke="#fff" stroke-width="3" />
                </g>
              </svg>
              <span v-if="a.name">{{ a.name }}</span>
            </li>
          </ul>
          <div class="scroll"><svg width="12" height="8"><path d="M1 7L6 2L11 7" /></svg><i></i><svg class="dn" width="12" height="8"><path d="M1 1L6 6L11 1" /></svg></div>
        </div>
      </aside>
    </div>

    <footer class="status">
      <span class="msg">向当前图形窗口添加一个关联图层，其Y轴在右侧，X轴隐藏 - 更多</span>
      <span class="dash">--</span><span class="gap"></span><span>AU : <em>开</em></span><span>Light Grids</span><span>1:[Book1]<em>输出数据</em>!Col(C)[1:9]</span><span>17KB - [Graph1]1!</span><span><em>弧度</em></span>
      <svg class="sizer" width="12" height="12" shape-rendering="crispEdges"><path d="M8 0h3v3h-3zM4 4h3v3h-3zM8 4h3v3h-3zM0 8h3v3h-3zM4 8h3v3h-3zM8 8h3v3h-3z" fill="#b5b5b5" /></svg>
    </footer>

    <svg class="clip" width="41" height="43" viewBox="0 0 41 43">
      <rect x="1" y="5" width="32" height="34" fill="#b9d4f6" fill-opacity=".75" stroke="#1f6fde" stroke-width="2" /><rect x="12" y="1" width="10" height="5" rx="2" fill="#1f6fde" />
      <path d="M9 16A9 9 0 1 1 9 25M8 12V17H13M17 14V21L22 24" fill="none" stroke="#f4555a" stroke-width="2" />
      <circle cx="32" cy="32" r="9" fill="#1f6fde" /><circle cx="31" cy="31" r="4" fill="none" stroke="#fff" stroke-width="2" /><path d="M34 34L38 38" stroke="#fff" stroke-width="3" />
    </svg>

    <div class="mark">
      <div class="zh"><span>我</span><span>爱</span><span>分</span><span>享</span><span>网</span></div>
      <div class="url">www.zhanshaoyi.com</div>
    </div>
  </div>
</template>

<style>
body { margin: 0; overflow: hidden; }
</style>

<style scoped>
* { box-sizing: border-box; }
button { border: 0; background: none; padding: 0; margin: 0; font: inherit; color: inherit; }
h1, h2, p, ul { margin: 0; padding: 0; font-weight: 400; }
.app { position: relative; height: 100vh; width: 100%; overflow: hidden; display: flex; flex-direction: column; border: 1px solid #6b6b6b; background: linear-gradient(90deg, #eaebfa, #f0f4fd); color: #000; font: 16px "Noto Sans", "Noto Sans CJK SC", sans-serif; }
.ic { width: 16px; height: 16px; flex: none; display: block; overflow: visible; }
.ic20 { width: 20px; height: 20px; }
.ic18 { width: 18px; height: 16px; }
.ic14 { width: 14px; height: 14px; }

.title { flex: none; height: 37px; background: #fff; display: flex; align-items: center; padding-left: 9px; }
.title .logo { width: 20px; height: 20px; }
.title h1 { flex: 1; font-size: 15px; line-height: 24px; margin-left: 5px; white-space: nowrap; }
.title h1 span { font-size: 17px; }
.wbtns { display: flex; }
.wbtns button { width: 59px; display: flex; justify-content: center; }
.wbtns path { stroke: #000; fill: none; }

.menuarea { flex: none; height: 61px; display: flex; }
.tallgrip { margin: 6px 0 8px 4px; }
.menucol { flex: 1; min-width: 0; }
.menus { display: flex; gap: 22px; padding: 0 0 0 8px; height: 33px; align-items: center; }
.menus button { font-size: 17px; line-height: 24px; white-space: nowrap; margin-top: -3px; }
.menus span { font-size: 15px; }
.menus u { text-underline-offset: 2px; }
.search { display: flex; align-items: center; width: 244px; height: 26px; margin-left: 9px; padding-left: 2px; background: #fff; border: 1px solid #888; border-radius: 5px; }
.search input { border: 0; background: none; outline: 0; font: 17px "Noto Sans", "Noto Sans CJK SC", sans-serif; width: 190px; height: 24px; margin-left: 4px; padding: 0; }
.search input::placeholder { color: #111; opacity: 1; }

.hrow { flex: none; display: flex; height: 31px; padding: 0 0 1px 1px; }
.hbar { display: flex; align-items: center; height: 30px; min-width: 0; border-radius: 4px; background: linear-gradient(#f7f9fe, #e6e8f4 45%, #b4b6cd); border-bottom: 1px solid #8e90ad; flex: none; }
.hbar.grow { flex: 1; }
.hbar.stub { width: 40px; }
.grip { flex: none; width: 3px; margin: 0 2px 0 4px; align-self: stretch; background: radial-gradient(#a0a0a4 60%, transparent 65%) 0 0 / 3px 5px; }
.hbar .grip { margin-top: 6px; margin-bottom: 5px; }
.sep { flex: none; width: 1px; height: 22px; margin: 0 4px 0 3px; background: #b9bac6; }
.tool { flex: none; min-width: 22px; height: 26px; display: flex; align-items: center; padding: 0 3px; border: 0; }
.tool.on { border: 1px solid #0078d7; background: #cde6f9; padding: 0 2px; }
.dd { flex: none; width: 6px; height: 4px; background: #000; clip-path: polygon(0 0, 100% 0, 50% 100%); margin-left: 3px; }
.cap { flex: none; width: 14px; height: 30px; margin-left: auto; border-radius: 0 4px 4px 0; background: linear-gradient(#a9abc5, #c6c7dc 50%, #ededfa); display: flex; align-items: center; justify-content: center; align-self: flex-start; }
.combo { flex: none; display: flex; align-items: center; background: #fff; height: 25px; margin: 0 3px; }
.combo select { appearance: none; border: 0; background: none; outline: 0; flex: 1; min-width: 0; font: 16px "Noto Sans", "Noto Sans CJK SC", sans-serif; padding: 0 0 0 3px; }
.combo .arr { width: 12px; height: 12px; padding: 1px; }
.zoomc { width: 72px; }
.zoomc .arr { height: 25px; background: #dcdfee; }
.off { background: #efeff4; border: 1px solid #b4b4bc; height: 26px; color: #777; }
.off select { color: #777; opacity: 1; }
.off .arr { opacity: .5; }
.fontc { width: 159px; margin: 0 4px 0 2px; padding-left: 6px; }
.fontc select { font-size: 17px; padding-left: 6px; }
.sizec { width: 75px; margin: 0 3px 0 0; }

.main { flex: 1; min-height: 0; display: flex; }
.sidetabs { flex: none; width: 24px; display: flex; flex-direction: column; gap: 15px; align-items: flex-start; }
.sidetabs button { writing-mode: vertical-rl; text-orientation: sideways; height: 95px; width: 24px; text-align: left; padding-top: 3px; background: #f0f0f0; border: 1px solid #d6d6da; border-top: 0; border-left: 0; color: #6a6a6a; font-size: 17px; line-height: 22px; white-space: pre; }
.sidetabs .tall { height: 152px; padding-top: 7px; }
.vcol { flex: none; width: 36px; margin-left: 3px; display: flex; flex-direction: column; gap: 2px; }
.right { width: 39px; margin-left: 2px; }
.vbar { flex: none; display: flex; flex-direction: column; width: 26px; border-left: 1px solid #fff; border-radius: 4px; background: linear-gradient(90deg, #f7f9fe, #e6e8f4 45%, #b0b2cb); box-shadow: -1px 0 #c3c5da; }
.vbar.wide { width: 34px; }
.vbar.tools { height: 482px; }
.vbar.grow { flex: 1; }
.vbar.tail { height: 128px; }
.vgrip { flex: none; height: 3px; width: 18px; margin: 4px 0 2px 3px; background: radial-gradient(#a0a0a4 60%, transparent 65%) 0 0 / 5px 3px; }
.vtool { flex: none; display: flex; align-items: center; height: 23px; }
.vtool span { width: 22px; height: 23px; display: flex; align-items: center; justify-content: center; flex: none; }
.vtool.on span { border: 1px solid #0078d7; background: #b5d9f3; }
.vcell { position: relative; height: 23px; }
.vtool .dd { margin-left: 1px; }
.vsep { flex: none; height: 1px; width: 20px; margin: 3px 0 4px 2px; background: #b4b5c2; }
.vcap { flex: none; margin-top: auto; height: 11px; border-radius: 0 0 4px 4px; background: linear-gradient(90deg, #e0e1f0, #a9abc6); display: flex; align-items: center; justify-content: space-between; padding: 0 2px 0 5px; }
.vcap svg:only-child { margin-left: auto; }

.center { flex: 1; min-width: 0; display: flex; flex-direction: column; margin-left: -1px; }
.mdi { flex: 1; min-height: 0; background: #ababab; border-left: 2px solid #777; border-top: 2px solid #777; border-right: 1px solid #fff; border-bottom: 1px solid #fff; display: flex; flex-direction: column; padding: 13px 30px 12px 11px; }
.gwin { flex: 1; min-height: 0; display: flex; flex-direction: column; background: #5a8bd5; border: 1px solid #47689c; border-radius: 8px 8px 0 0; padding: 0 9px 8px 9px; }
.gtitle { flex: none; height: 36px; display: flex; align-items: center; }
.gtitle h2 { flex: 1; font-size: 16px; line-height: 24px; margin: 5px 0 0 5px; color: #0c1320; }
.gtitle button { width: 14px; height: 14px; margin: 0 6px 1px 25px; }
.gtitle path { stroke: #000; fill: none; stroke-width: 3; }
.gbody { flex: 1; min-height: 0; display: flex; border: 1px solid #fff; border-top: 2px solid #777; border-left-color: #777; background: #fff; overflow: hidden; }
.sheet { flex: 1; min-width: 0; position: relative; background: #fff; }
.chart { display: block; }
.chart text { font: 12px "Liberation Mono", monospace; }
.ln { stroke: #000; fill: none; }
.wh { fill: #fff; }
.gutter { flex: none; width: 59px; background: #c0c0c0; }
.badges { position: absolute; top: 1px; left: 1px; }
.badges b { display: block; width: 24px; height: 24px; background: #69c; color: #fff; font: bold 19px/24px "Liberation Sans", sans-serif; text-align: center; margin-bottom: 4px; }
.badges .ic { width: 16px; height: 18px; margin-left: 4px; }
.feedback { flex: none; align-self: flex-end; color: #06c; font-size: 20px; line-height: 26px; margin: 4px -17px 0 0; text-underline-offset: 3px; }
.feedback span { font-family: "DejaVu Sans", sans-serif; font-size: 18px; }
.bottomrow { height: 34px; padding: 0; align-items: flex-start; }
.bottomrow .hbar { height: 32px; }
.bottomrow .cap { height: 32px; }

.panels { flex: none; width: 191px; display: flex; flex-direction: column; margin-right: 1px; padding-bottom: 1px; background: #f0f3fd; }
.phead { flex: none; height: 30px; display: flex; align-items: center; background: linear-gradient(#bccbd8, #d6e2ef); padding: 0 0 0 4px; margin-top: 1px; }
.phead h2 { flex: 1; font-size: 15px; line-height: 22px; white-space: nowrap; }
.phead.cjk h2 { font-size: 17px; margin-top: -4px; }
.phead button { width: 17px; display: flex; justify-content: center; }
.phead.cjk button:nth-of-type(-n+3) { width: 20px; }
.phead.apps { margin-top: 4px; }
.treebox { flex: none; height: 89px; border: 2px solid #666; background: #fff; font-size: 14px; }
.trow { display: flex; align-items: center; height: 22px; padding-left: 3px; position: relative; }
.trow.sel { background: #0078d7; color: #fff; outline: 1px dotted #fff; outline-offset: -1px; gap: 4px; }
.l1 { padding-left: 18px; gap: 3px; }
.l2 { padding-left: 48px; gap: 4px; }
.pm { width: 12px; height: 12px; border: 1px solid #888; background: linear-gradient(#3a62b5, #3a62b5) center / 8px 2px no-repeat #f4f4f4; flex: none; }
.trow input { appearance: none; margin: 0; width: 17px; height: 17px; border: 1px solid #333; background: #fff; flex: none; display: grid; place-items: center; }
.trow input::before { content: ""; width: 10px; height: 5px; border-left: 2px solid #333; border-bottom: 2px solid #333; transform: rotate(-45deg); margin-top: -3px; }
.swatch { width: 43px; height: 15px; background: #fcc898; border: 1px solid #a98360; flex: none; }
.dot1, .dot2 { position: absolute; width: 10px; height: 16px; border-left: 1px dotted #999; border-bottom: 1px dotted #999; left: 8px; top: -5px; }
.dot2 { left: 24px; }
.appbody { flex: 1; min-height: 0; display: flex; border-top: 1px solid #8c8c8c; background: #f0f0f0; }
.strip { flex: none; width: 31px; overflow: hidden; display: flex; flex-direction: column; padding: 1px 0 0 4px; }
.sa { height: 16px; width: 24px; display: flex; align-items: center; justify-content: center; flex: none; }
.vt { flex: none; display: grid; width: 27px; height: 56px; margin-bottom: -7px; place-items: center; position: relative; }
.vt:nth-of-type(5) { margin-top: 2px; }
.vt:nth-of-type(6) { height: 64px; }
.vt svg, .vt b { grid-area: 1 / 1; }
.vt svg { align-self: start; }
.vt b { writing-mode: vertical-rl; text-orientation: sideways; font-weight: 400; font-size: 15px; line-height: 20px; }
.vt.act b { font-weight: 700; }
.applist { flex: 1; min-width: 0; overflow: hidden; background: #fff; border-left: 1px solid #888; list-style: none; padding-top: 4px; }
.applist li { width: 92px; height: 94px; display: flex; flex-direction: column; align-items: center; }
.applist span { font-size: 15px; line-height: 20px; margin-top: 4px; text-align: center; width: 90px; }
.scroll { flex: none; width: 22px; display: flex; flex-direction: column; align-items: center; padding: 9px 3px 9px 0; border-right: 1px solid #999; }
.scroll i { width: 19px; height: 180px; background: #cdcdcd; margin-top: 7px; }
.scroll path { stroke: #555; stroke-width: 2; fill: none; }
.scroll .dn { margin-top: auto; }

.redbox { position: absolute; left: -12px; top: -6px; width: 44px; height: 37px; border: 3px solid #ed1c24; }
.redarrow { position: absolute; left: -46px; top: -52px; z-index: 6; }
.tip { position: absolute; z-index: 5; left: 14px; top: 36px; width: 270px; height: 121px; display: flex; gap: 4px; padding: 3px 6px; border: 1px solid #808080; background: linear-gradient(#fff, #efeff1); white-space: nowrap; font-size: 17px; line-height: 21px; }
.tip .ic { margin-top: 2px; }
.tip strong { display: block; line-height: 24px; margin-bottom: 4px; }
.tip .f1 { margin: 21px 0 0 4px; }

.status { flex: none; height: 26px; display: flex; align-items: center; background: #f0f0f0; border-top: 1px solid #d7d7d7; font-size: 15px; white-space: nowrap; line-height: 24px; }
.status span { padding: 0 6px 0 5px; border-right: 1px solid #c4c4c4; flex: none; }
.status em { font-style: normal; font-size: 17px; }
.status .msg { flex: 1; min-width: 0; overflow: hidden; padding: 0; margin-left: 45px; font-size: 17px; }
.status .gap { width: 7px; height: 22px; padding: 0; }
.sizer { margin: 8px 2px 0 8px; }
.clip { position: absolute; left: 3px; bottom: 0; }
.mark { position: absolute; left: 251px; top: 149px; color: #ed1c24; font-weight: 700; }
.zh { display: flex; gap: 14px; font: bold 22px/26px "Noto Sans CJK SC", sans-serif; }
.url { font: bold 18px/20px "Liberation Serif", serif; margin-top: 8px; }
</style>
